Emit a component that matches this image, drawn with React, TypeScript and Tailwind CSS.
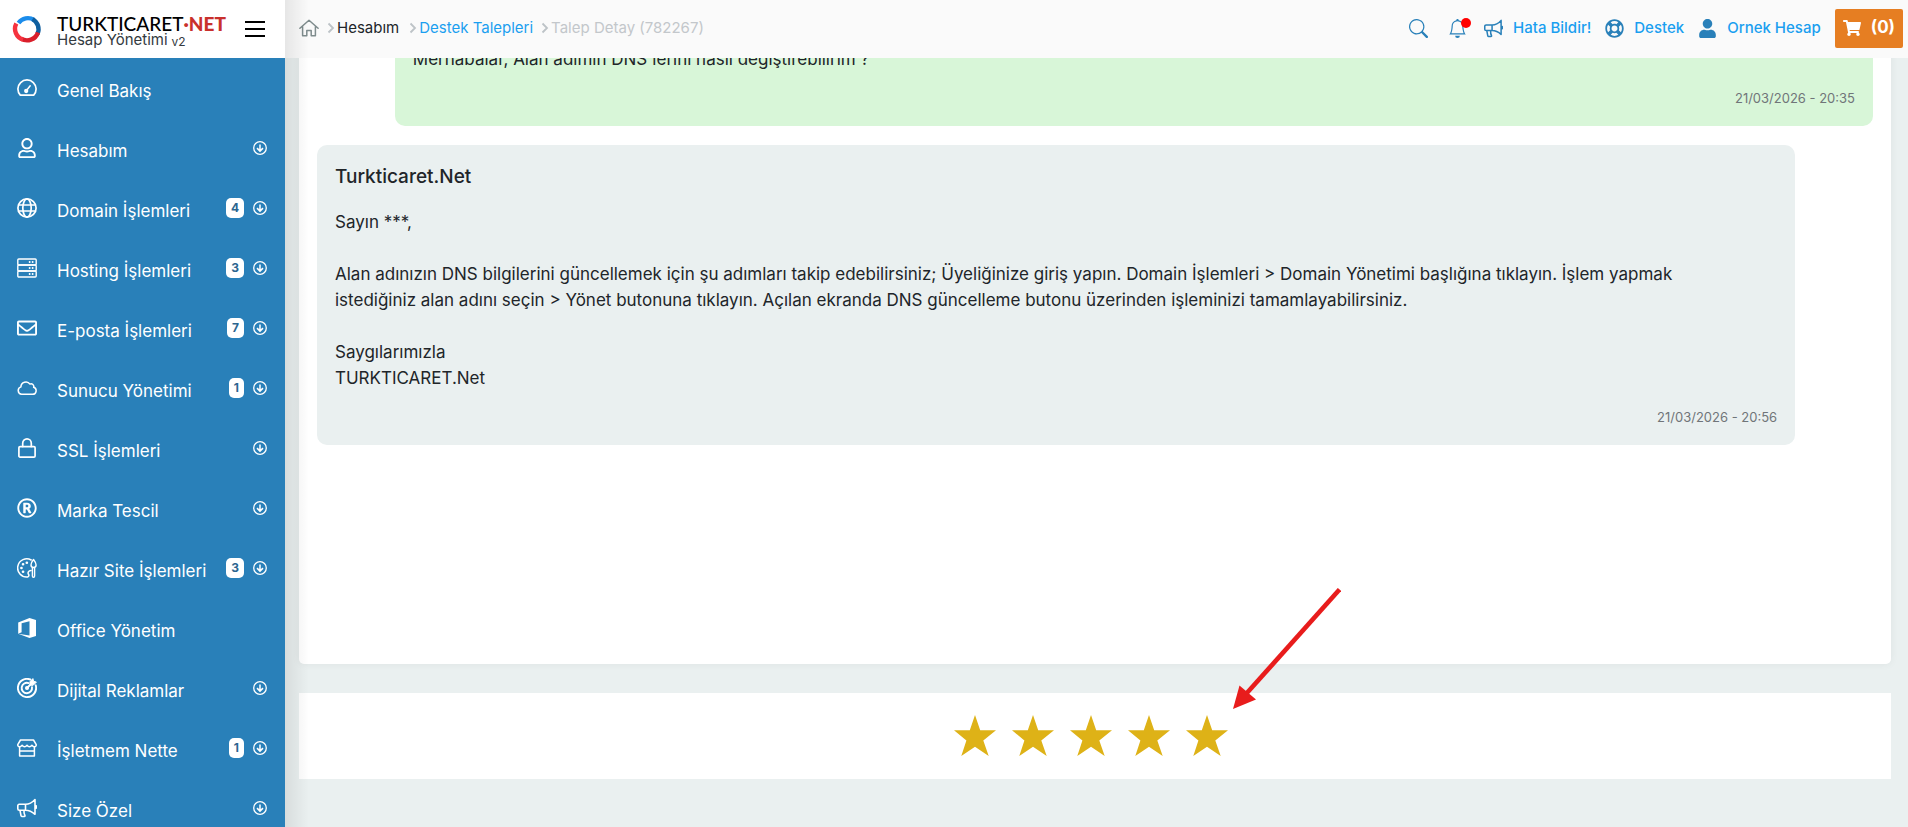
import type { ReactNode } from "react";
import { BsBell, BsSearch } from "react-icons/bs";
import {
  FaRegEnvelope,
  FaRegLifeRing,
  FaRegRegistered,
  FaRegUser,
  FaShoppingCart,
  FaUser,
} from "react-icons/fa";

type IconProps = { className?: string; children?: ReactNode };

const LineIcon = ({ className = "size-5", children }: IconProps) => (
  <svg
    className={className}
    viewBox="0 0 20 20"
    fill="none"
    stroke="currentColor"
    strokeWidth="1.7"
    strokeLinecap="round"
    strokeLinejoin="round"
    aria-hidden="true"
  >
    {children}
  </svg>
);

const GaugeIcon = () => (
  <LineIcon>
    <path d="M3.3 17.2A9.1 9.1 0 1 1 16.7 17.2Z" />
    <path d="M9.5 12.5 13.2 7.8" strokeWidth="1.5" />
    <circle cx="9.2" cy="13" r="1.3" fill="currentColor" />
  </LineIcon>
);

const GlobeIcon = () => (
  <LineIcon>
    <circle cx="10" cy="10" r="9.1" />
    <ellipse cx="10" cy="10" rx="4.2" ry="9.1" />
    <path d="M1.6 7h16.8M1.6 13h16.8" />
  </LineIcon>
);

const ServerIcon = () => (
  <LineIcon>
    <g strokeWidth="1.4">
      <rect x=".8" y="1" width="18.4" height="6" rx="1" />
      <rect x=".8" y="7" width="18.4" height="6" rx="1" />
      <rect x=".8" y="13" width="18.4" height="6" rx="1" />
    </g>
    <path
      d="M12.6 4h.1M15.6 4h.1M12.6 10h.1M15.6 10h.1M12.6 16h.1M15.6 16h.1"
      strokeWidth="1.8"
    />
  </LineIcon>
);

const CloudIcon = () => (
  <LineIcon>
    <path
      d="M4.6 16.3h11a3.6 3.6 0 0 0 1.1-7 2.7 2.7 0 0 0-3.7-3.2A5 5 0 0 0 3.9 8.9a3.8 3.8 0 0 0 .7 7.4Z"
      strokeWidth="1.5"
    />
  </LineIcon>
);

const LockIcon = () => (
  <LineIcon>
    <rect x="1.9" y="8.6" width="16.2" height="10.5" rx="1.2" />
    <path d="M5.7 8.4V5.2a4.3 4.3 0 0 1 8.6 0v3.2" />
  </LineIcon>
);

const PaletteIcon = () => (
  <LineIcon>
    <path
      d="M14.2 2A9.1 9.1 0 1 0 10.6 19c1.5-.3 1.6-1.7.9-2.7-1.1-1.7 0-3.7 2.5-3.9"
      strokeWidth="1.5"
    />
    <path
      d="M16.5 1.5c-1.6 2-2.5 3.7-2.5 5.5 0 1.5 1 2.5 2.5 2.5s2.6-1 2.6-2.5c0-1.8-1-3.5-2.6-5.5ZM15.4 9.8v8.2c0 1.6 2.2 1.6 2.2 0V9.8"
      strokeWidth="1.4"
    />
    <path d="M9.8 4.8h.1M6 6.3h.1M4.4 10h.1M6 13.8h.1" strokeWidth="2.6" />
  </LineIcon>
);

const OfficeIcon = () => (
  <svg className="size-5" viewBox="0 0 20 20" fill="currentColor" aria-hidden="true">
    <path d="M1.2 4.6 12.5 0 19 2v16l-6.5 2-11.3-4.3 11.3 1.7V3.3L4.6 5.2v9.1l-3.4 1.4Z" />
  </svg>
);

const TargetIcon = () => (
  <LineIcon>
    <path d="M13.3 1.5A9.1 9.1 0 1 0 18.7 7.3" strokeWidth="1.9" />
    <path d="M11.6 5.1A5.2 5.2 0 1 0 15 9.2" strokeWidth="1.9" />
    <path d="M10 10 14 6" strokeWidth="1.9" />
    <path d="m13.2 6.8-.3-3 3-3.2.7 2.7 2.8.8-3 3Z" fill="currentColor" strokeWidth="1" />
    <circle cx="10" cy="10" r="1.2" fill="currentColor" />
  </LineIcon>
);

const StoreIcon = () => (
  <LineIcon>
    <path
      d="M3.5 2h13l2.6 4.3c.5 1.4-.5 2.5-1.7 2.5s-1.9-.7-2.5-1.5c-.6.8-1.3 1.5-2.5 1.5S10.6 8.1 10 7.3c-.6.8-1.3 1.5-2.4 1.5S5.7 8.1 5.1 7.3c-.6.8-1.3 1.5-2.5 1.5S.4 7.7.9 6.3Z"
      strokeWidth="1.5"
    />
    <path d="M2.6 9v9h14.8V9M2.6 13h14.8" strokeWidth="1.5" />
  </LineIcon>
);

const MegaphoneIcon = ({ className }: IconProps) => (
  <LineIcon className={className}>
    <path
      d="M2.2 6.3h6.3c3.5 0 7-2 9.5-4.8v14.8c-2.5-2.3-6-4.1-9.5-4.1H2.2A1.4 1.4 0 0 1 .8 10.8V7.7a1.4 1.4 0 0 1 1.4-1.4ZM8.5 6.3v5.9M19.2 7.8v2.4M3 12.4l1 5.3c.1.5.4.8.9.8h2.4c.6 0 .9-.6.6-1.1-.8-1.2-1.1-2.7-.9-5"
      strokeWidth="1.6"
    />
  </LineIcon>
);

const HomeIcon = () => (
  <LineIcon className="size-5 text-[#7f8c8d]">
    <path d="m.9 10.3 9.1-8 9.1 8M3.6 8.5v9.2h4.2v-5.2h4.4v5.2h4.2V8.5" strokeWidth="1.5" />
  </LineIcon>
);

const ChevronIcon = () => (
  <svg
    className="h-3 w-2 text-[#bdc3c7]"
    viewBox="0 0 8 12"
    fill="none"
    stroke="currentColor"
    strokeWidth="1.8"
    aria-hidden="true"
  >
    <path d="m1.5 1.5 4.5 4.5-4.5 4.5" />
  </svg>
);

const DownIcon = () => (
  <svg
    className="size-3.5"
    viewBox="0 0 14 14"
    fill="none"
    stroke="currentColor"
    strokeWidth="1.3"
    aria-hidden="true"
  >
    <circle cx="7" cy="7" r="6.3" />
    <path d="M7 3.5v6.5M4 7.1l3 3 3-3" strokeWidth="1.5" />
  </svg>
);

const LogoMark = () => (
  <svg className="h-7 w-[30px]" viewBox="0 0 30 28" fill="none" strokeWidth="4.4" aria-hidden="true">
    <path d="M6.5 8A11.5 11.5 0 0 1 22 4.9" stroke="#1b8ceb" />
    <path d="M20.5 4.1A11.5 11.5 0 0 1 25.5 19" stroke="#0f5f9f" />
    <path d="M26 17.5A11.5 11.5 0 0 1 9 23.6" stroke="#d91f2b" />
    <path d="M11 24.7A11.5 11.5 0 0 1 4.3 8.5" stroke="#f5333f" />
  </svg>
);

const menuItems = [
  { label: "Genel Bakış", icon: <GaugeIcon />, leaf: true },
  { label: "Hesabım", icon: <FaRegUser className="size-5" /> },
  { label: "Domain İşlemleri", icon: <GlobeIcon />, count: 4 },
  { label: "Hosting İşlemleri", icon: <ServerIcon />, count: 3 },
  { label: "E-posta İşlemleri", icon: <FaRegEnvelope className="size-5" />, count: 7 },
  { label: "Sunucu Yönetimi", icon: <CloudIcon />, count: 1 },
  { label: "SSL İşlemleri", icon: <LockIcon /> },
  { label: "Marka Tescil", icon: <FaRegRegistered className="size-5" /> },
  { label: "Hazır Site İşlemleri", icon: <PaletteIcon />, count: 3 },
  { label: "Office Yönetim", icon: <OfficeIcon />, leaf: true },
  { label: "Dijital Reklamlar", icon: <TargetIcon /> },
  { label: "İşletmem Nette", icon: <StoreIcon />, count: 1 },
  { label: "Size Özel", icon: <MegaphoneIcon /> },
];

const Sidebar = () => (
  <aside className="relative z-20 flex w-[285px] shrink-0 flex-col overflow-hidden bg-[#2980b9]">
    <div className="flex h-[58px] shrink-0 items-center bg-white pr-5 pl-3">
      <LogoMark />
      <div className="ml-[15px] flex flex-col pt-1.5">
        <span className="font-[Lato,sans-serif] text-[19px] leading-4 font-medium whitespace-nowrap text-black">
          TURKTICARET
          <span className="font-black text-[#c9302c]">·NET</span>
        </span>
        <span className="flex items-end gap-1 text-[15px] leading-4 whitespace-nowrap text-[#343a40]">
          Hesap Yönetimi <small className="text-[12px] leading-3">v2</small>
        </span>
      </div>
      <button type="button" aria-label="Menü" className="ml-auto flex w-5 flex-col gap-[5px]">
        <span className="h-0.5 bg-black" />
        <span className="h-0.5 bg-black" />
        <span className="h-0.5 bg-black" />
      </button>
    </div>

    <nav className="flex flex-col text-white">
      {menuItems.map((item) => (
        <a
          key={item.label}
          href="#"
          className="flex h-[60px] shrink-0 items-center pr-[18px] pl-[17px]"
        >
          {item.icon}
          <span className="ml-5 pt-1.5 text-[17px] leading-6 whitespace-nowrap">{item.label}</span>
          <span className="ml-auto flex items-center gap-[9px]">
            {item.count && (
              <span className="rounded-[5px] bg-white px-[5px] text-[12px] leading-5 font-bold text-[#2c6690]">
                {item.count}
              </span>
            )}
            {!item.leaf && <DownIcon />}
          </span>
        </a>
      ))}
    </nav>
  </aside>
);

const Header = () => (
  <header className="relative flex h-[58px] shrink-0 items-center bg-[#fafafa] pr-[5px] pb-0.5 pl-3.5">
    <nav aria-label="breadcrumb" className="flex items-center text-[15px] whitespace-nowrap">
      <a href="#" aria-label="Ana Sayfa">
        <HomeIcon />
      </a>
      <span className="ml-2 flex items-center gap-0.5">
        <ChevronIcon />
        <a href="#" className="text-[#212529]">
          Hesabım
        </a>
      </span>
      <span className="ml-2.5 flex items-center gap-0.5">
        <ChevronIcon />
        <a href="#" className="text-[#1a9ff0]">
          Destek Talepleri
        </a>
      </span>
      <span className="ml-2 flex items-center gap-0.5 text-[#c3c7cb]">
        <ChevronIcon />
        Talep Detay (782267)
      </span>
    </nav>

    <div className="ml-auto flex items-center text-[15px] font-medium whitespace-nowrap text-[#1a9ff0]">
      <button type="button" aria-label="Ara" className="text-[#2980b9]">
        <BsSearch className="size-[19px]" />
      </button>
      <button type="button" aria-label="Bildirimler" className="relative ml-5 text-[#2980b9]">
        <BsBell className="size-[19px]" />
        <span className="absolute -top-px -right-1 size-2.5 rounded-full bg-[#ff0000]" />
      </button>
      <a href="#" className="ml-[17px] flex items-center gap-2.5">
        <MegaphoneIcon className="size-[19px] text-[#2980b9]" />
        Hata Bildir!
      </a>
      <a href="#" className="ml-3.5 flex items-center gap-2.5">
        <FaRegLifeRing className="size-[19px] text-[#2980b9]" />
        Destek
      </a>
      <a href="#" className="ml-3.5 flex items-center gap-2.5">
        <FaUser className="size-[19px] text-[#2980b9]" />
        Ornek Hesap
      </a>
      <button
        type="button"
        className="ml-3.5 flex h-[39px] items-center gap-2.5 rounded-xs bg-[#e67e22] px-2 text-[17px] font-bold text-white"
      >
        <FaShoppingCart className="size-[18px]" />
        (0)
      </button>
    </div>
  </header>
);

type MessageProps = {
  author?: string;
  date: string;
  own?: boolean;
  children: ReactNode;
};

const Message = ({ author, date, own, children }: MessageProps) => (
  <article
    className={`w-[95%] rounded-[10px] px-[18px] pt-[18px] pb-4 text-[#212529] ${
      own ? "ml-auto bg-[#d8f6d8]" : "bg-[#eaf0f0]"
    }`}
  >
    {author && <h2 className="mb-[18px] text-[19px] leading-7 font-medium">{author}</h2>}
    <div className="flex flex-col gap-[26px] text-[17px] leading-[26px]">{children}</div>
    <time className="mt-3.5 block text-right text-[13px] leading-6 text-[#707579]">{date}</time>
  </article>
);

const Rating = () => (
  <section className="flex h-[86px] shrink-0 items-center justify-center gap-4 bg-white pr-2 pb-0.5">
    {[1, 2, 3, 4, 5].map((star) => (
      <button key={star} type="button" aria-label={`${star} yıldız`} className="text-[#deb217]">
        <svg className="h-[41px] w-[42px]" viewBox="0 0 42 41" fill="currentColor" aria-hidden="true">
          <path d="m21 0 5.2 15.2H42L29.3 25.4 34.7 41 21 31.7 7.3 41l5.1-15.6L0 15.2h15.8Z" />
        </svg>
      </button>
    ))}
  </section>
);

const App = () => {
  return (
    <div className="flex h-screen overflow-hidden bg-[#eaf0f0] font-[Inter,sans-serif]">
      <Sidebar />
      <div className="relative flex min-w-0 flex-1 flex-col">
        <Header />
        {/* Conversation, scrolled to its end */}
        <main className="flex min-h-0 flex-1 flex-col justify-end overflow-hidden pr-[17px] pb-12 pl-3.5">
          <section className="mb-[29px] flex shrink-0 flex-col gap-[19px] rounded-[5px] bg-white px-[18px] pt-[18px] pb-[219px] shadow-[0_0_8px_rgba(0,0,0,0.06)]">
            <Message date="21/03/2026 - 20:35" own>
              <p>Merhabalar, Alan adımın DNS'lerini nasıl değiştirebilirim ?</p>
            </Message>
            <Message author="Turkticaret.Net" date="21/03/2026 - 20:56">
              <p>Sayın ***,</p>
              <p>
                Alan adınızın DNS bilgilerini güncellemek için şu adımları takip edebilirsiniz;
                Üyeliğinize giriş yapın. Domain İşlemleri &gt; Domain Yönetimi başlığına tıklayın.
                İşlem yapmak <br className="hidden xl:inline" />
                istediğiniz alan adını seçin &gt; Yönet butonuna tıklayın. Açılan ekranda DNS
                güncelleme butonu üzerinden işleminizi tamamlayabilirsiniz.
              </p>
              <p>
                Saygılarımızla
                <br />
                TURKTICARET.Net
              </p>
            </Message>
          </section>
          <Rating />
        </main>

        {/* Sidebar shade */}
        <div className="pointer-events-none absolute inset-y-0 left-0 w-6 bg-linear-to-r from-black/8 to-transparent" />

        <svg
          className="pointer-events-none absolute top-[588px] left-[948px] h-[122px] w-[108px]"
          viewBox="0 0 108 122"
          aria-hidden="true"
        >
          <path d="M106.5 1.5 13 106" stroke="#e81c1c" strokeWidth="4.6" />
          <path d="M0 121 6.5 97.5 23 111.5Z" fill="#e81c1c" />
        </svg>
      </div>
    </div>
  );
};

export default App;
